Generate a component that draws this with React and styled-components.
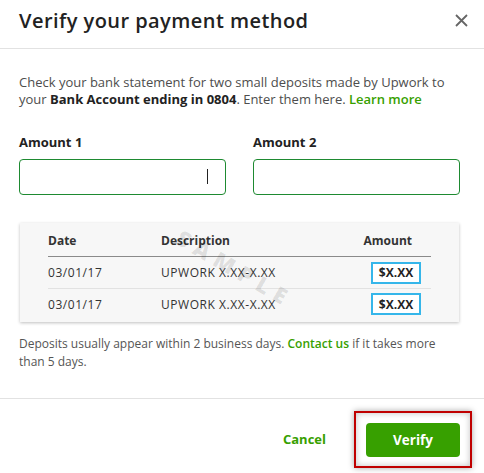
import React from "react";
import styled, { createGlobalStyle } from "styled-components";

const Global = createGlobalStyle`
  html, body { margin: 0; padding: 0; background: #fff; }
  body { font-family: "Open Sans", "Liberation Sans", sans-serif; }
  * { box-sizing: border-box; }
`;

const Dialog = styled.div`
  width: 484px;
  height: 473px;
  background: #fff;
  display: flex;
  flex-direction: column;
  color: #4a4a4a;
`;

const Header = styled.div`
  height: 49px;
  padding: 0 15px 8px 19px;
  display: flex;
  align-items: center;
  justify-content: space-between;
  border-bottom: 1px solid #e2e2e2;
`;

const Title = styled.h1`
  margin: 0;
  font-size: 20px;
  font-weight: 600;
  color: #222;
  letter-spacing: 0.45px;
`;

const CloseButton = styled.button`
  border: 0;
  background: none;
  padding: 0;
  width: 16px;
  height: 16px;
  display: flex;
  align-items: center;
  justify-content: center;
  cursor: pointer;
`;

const Body = styled.div`
  padding: 25px 19px 0 19px;
  flex: 1;
`;

const Intro = styled.p`
  margin: 0;
  font-size: 13px;
  line-height: 17px;
  color: #4d4d4d;
`;

const Strong = styled.b`
  color: #222;
  font-weight: 700;
`;

const Link = styled.a`
  color: #37a000;
  font-weight: 600;
  text-decoration: none;
`;

const Fields = styled.div`
  margin-top: 26px;
  display: grid;
  grid-template-columns: 207px 207px;
  column-gap: 27px;
`;

const Field = styled.div`
  display: flex;
  flex-direction: column;
`;

const Label = styled.label`
  font-size: 13px;
  line-height: 16px;
  font-weight: 700;
  color: #222;
  margin-bottom: 9px;
`;

const InputBox = styled.div`
  height: 36px;
  border: 1px solid #1e8a31;
  border-radius: 4px;
  position: relative;
`;

const Caret = styled.span`
  position: absolute;
  left: 187px;
  top: 9px;
  width: 1px;
  height: 15px;
  background: #222;
`;

const Card = styled.div`
  position: relative;
  margin: 28px 0 0 1px;
  width: 439px;
  background: #f7f7f7;
  box-shadow: 0 1px 3px rgba(0, 0, 0, 0.25);
  padding: 0 28px 3px 28px;
  overflow: hidden;
`;

const Row = styled.div`
  display: grid;
  grid-template-columns: 113px 1fr 80px;
  align-items: center;
  font-size: 12px;
  color: #333;
  ${(p) =>
    p.$head
      ? `padding: 9px 0 6px; line-height: 18px; font-weight: 700; border-bottom: 1px solid #8a8a8a;`
      : `height: ${p.$last ? 30 : 32}px; letter-spacing: 0.55px; ${p.$last ? "" : "border-bottom: 1px solid #e2e2e2;"}`}
`;

const AmountHead = styled.span`
  text-align: right;
  padding-right: 19px;
`;

const AmountCell = styled.span`
  display: flex;
  justify-content: flex-end;
  padding-right: 10px;
  letter-spacing: 0;
`;

const AmountBox = styled.span`
  width: 50px;
  height: 22px;
  border: 2px solid #35b6ea;
  display: flex;
  align-items: center;
  justify-content: center;
  font-weight: 700;
  font-size: 12px;
  color: #222;
  background: #fff;
`;

const Watermark = styled.span`
  position: absolute;
  left: 150px;
  top: 30px;
  font-size: 22px;
  font-weight: 800;
  letter-spacing: 7px;
  color: rgba(0, 0, 0, 0.11);
  transform: rotate(30deg);
  transform-origin: center;
  pointer-events: none;
`;

const Note = styled.p`
  margin: 13px 0 0;
  padding-right: 22px;
  font-size: 12px;
  line-height: 18px;
  color: #555;
`;

const Footer = styled.div`
  border-top: 1px solid #e2e2e2;
  height: 75px;
  display: flex;
  align-items: flex-start;
  justify-content: flex-end;
  padding: 12px 12px 0 0;
  gap: 28px;
`;

const CancelButton = styled.button`
  border: 0;
  background: none;
  padding: 0;
  margin-top: 19px;
  font-family: inherit;
  font-size: 13px;
  font-weight: 700;
  color: #37a000;
  line-height: 18px;
  cursor: pointer;
`;

const Highlight = styled.div`
  width: 118px;
  height: 57px;
  border: 2px solid #c00000;
  padding: 10px 10px 9px 10px;
  box-shadow: 0 0 6px rgba(0, 0, 0, 0.35), inset 0 0 6px rgba(0, 0, 0, 0.25);
`;

const PrimaryButton = styled.button`
  width: 94px;
  height: 34px;
  border: 0;
  border-radius: 4px;
  background: #37a000;
  color: #fff;
  font-family: inherit;
  font-size: 13.5px;
  font-weight: 700;
  cursor: pointer;
`;

const rows = [
  { date: "03/01/17", desc: "UPWORK X.XX-X.XX", amount: "$X.XX" },
  { date: "03/01/17", desc: "UPWORK X.XX-X.XX", amount: "$X.XX" },
];

export default function App() {
  return (
    <>
      <Global />
      <Dialog>
        <Header>
          <Title>Verify your payment method</Title>
          <CloseButton aria-label="Close">
            <svg width="13" height="13" viewBox="0 0 13 13">
              <path d="M1 1 L12 12 M12 1 L1 12" stroke="#666" strokeWidth="1.8" />
            </svg>
          </CloseButton>
        </Header>
        <Body>
          <Intro>
            Check your bank statement for two small deposits made by Upwork to
            your <Strong>Bank Account ending in 0804</Strong>. Enter them here.{" "}
            <Link href="#">Learn more</Link>
          </Intro>
          <Fields>
            <Field>
              <Label>Amount 1</Label>
              <InputBox>
                <Caret />
              </InputBox>
            </Field>
            <Field>
              <Label>Amount 2</Label>
              <InputBox />
            </Field>
          </Fields>
          <Card>
            <Row $head>
              <span>Date</span>
              <span>Description</span>
              <AmountHead>Amount</AmountHead>
            </Row>
            {rows.map((r, i) => (
              <Row key={i} $last={i === rows.length - 1}>
                <span>{r.date}</span>
                <span>{r.desc}</span>
                <AmountCell>
                  <AmountBox>{r.amount}</AmountBox>
                </AmountCell>
              </Row>
            ))}
            <Watermark>SAMPLE</Watermark>
          </Card>
          <Note>
            Deposits usually appear within 2 business days.{" "}
            <Link href="#">Contact us</Link> if it takes more than 5 days.
          </Note>
        </Body>
        <Footer>
          <CancelButton>Cancel</CancelButton>
          <Highlight>
            <PrimaryButton>Verify</PrimaryButton>
          </Highlight>
        </Footer>
      </Dialog>
    </>
  );
}
